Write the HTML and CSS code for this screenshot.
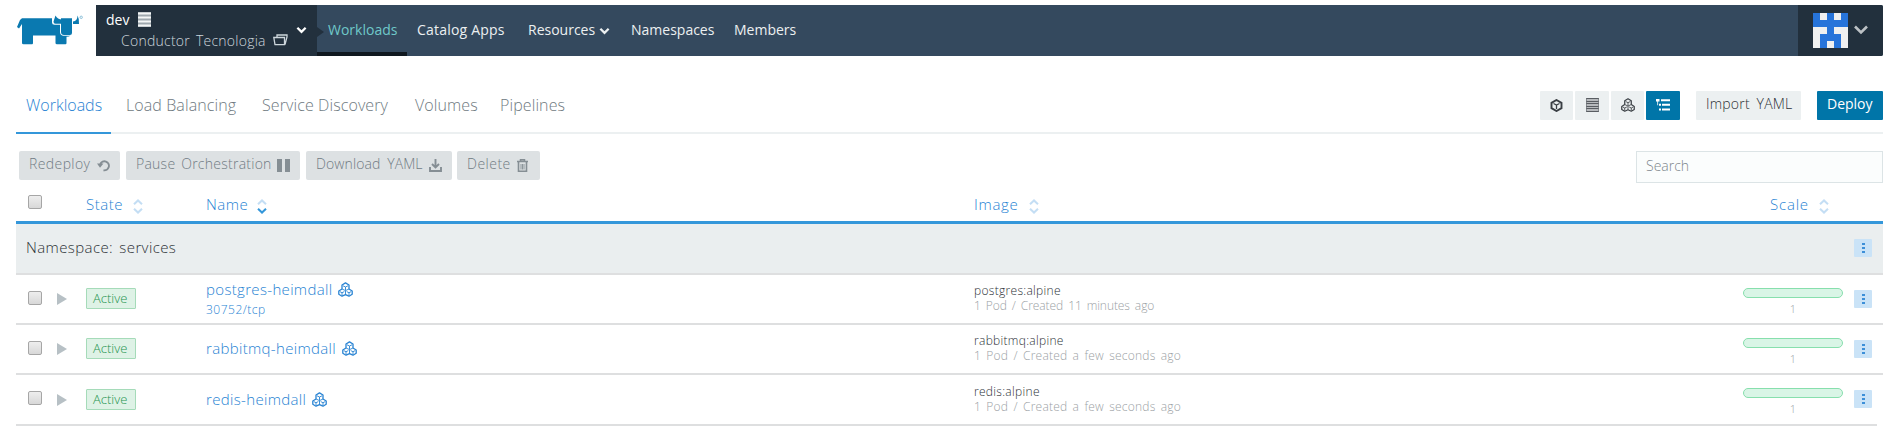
FILE: index.html
```
<!DOCTYPE html>
<html lang="en">
<head>
<meta charset="utf-8">
<title>Workloads</title>
<link rel="stylesheet" href="styles.css">
</head>
<body>
<svg class="defs" width="0" height="0">
  <symbol id="pods" viewBox="0 0 15 15"><g fill="none" stroke="currentColor" stroke-width="1.300" stroke-linejoin="round"><path d="M4 7V3L7.500 .9 11 3V7M4 7 .8 9V12.300L4 14.200 7.500 12.600 11 14.200 14.200 12.300V9L11 7"/></g><g fill="none" stroke="currentColor" stroke-width=".9"><path d="M5 3.800 7.500 5 10 3.800M7.500 5V8.200M4 7 7.500 8.600 11 7M7.500 8.600V12.500M1.800 9.600 4 10.700 6.300 9.600M4 10.700V13.500M8.700 9.600 11 10.700 13.200 9.600M11 10.700V13.500"/></g></symbol>
  <symbol id="sort" viewBox="0 0 10 15"><path class="up" d="M1 5.300 5 1.500 9 5.300" fill="none" stroke-width="2"/><path class="down" d="M1 9.700 5 13.500 9 9.700" fill="none" stroke-width="2"/></symbol>
  <symbol id="chevron" viewBox="0 0 12 8"><path d="M1.500 1.500 6 6 10.500 1.500" fill="none" stroke="currentColor" stroke-width="2.500"/></symbol>
  <symbol id="server" viewBox="0 0 13 14"><path d="M0 0h13v14H0z" fill="currentColor" opacity=".3"/><path d="M.5 .5h12M.5 3.500h12M.5 5.500h12M.5 8.500h12M.5 10.500h12M.5 13.500h12" stroke="currentColor" opacity=".75"/><path d="M.5 0v14M12.500 0v14" stroke="currentColor" opacity=".4"/></symbol>
</svg>

<header class="header">
  <a class="logo">
    <svg width="68" height="31" viewBox="0 0 68 31"><path fill="#0a79b0" d="M5 3.200H35V7.500Q35 9.700 37.500 9.700H43V17Q43 20 46 20.800H53.500Q52 21.800 49.500 21.800V28Q49.500 29.300 48.500 29.300H40Q38.500 29.300 38.500 28V20.500H16V28Q16 29.300 15 29.300H6.500Q5 29.300 5 28V9L2 13.500 0 12 3 5Z"/><path fill="#0a79b0" d="M44 3.200H55V18Q55 20 53 20H47Q44 20 44 17ZM38.500 .5Q40.500 4.500 45 4.500V8.700H38.500Q36.300 8.700 36.500 6.500ZM60.500 .5Q62.500 4 62 9H56V6.500Q60.500 6 60.500 .5Z"/><circle cx="64.200" cy="2.300" r="1.200" fill="none" stroke="#75b3d1" stroke-width=".8"/></svg>
  </a>
  <div class="bar">
    <div class="scope">
      <div class="scope-names">
        <div class="cluster">dev <svg width="13" height="15" viewBox="0 0 13 15"><path d="M0 0h13v15H0z" fill="#9fa8ae"/><path d="M0 1.500h13M0 5.500h13M0 9.500h13M0 13.500h13" stroke="#f4f6f6" stroke-width="2"/></svg></div>
        <div class="project">Conductor Tecnologia
          <svg width="15" height="12" viewBox="0 0 15 12" fill="none" stroke="currentColor" stroke-width="1.300"><path d="M2 10.700.8 3.500H11.500V10.700ZM4 3V1H14V3L12 10.700"/></svg>
        </div>
      </div>
      <svg class="scope-chevron" width="11" height="8"><use href="#chevron"/></svg>
    </div>
    <nav class="nav">
      <a class="nav-item nav-active">Workloads</a>
      <a class="nav-item nav-catalog">Catalog Apps</a>
      <a class="nav-item nav-resources">Resources <svg width="11" height="8"><use href="#chevron"/></svg></a>
      <a class="nav-item nav-namespaces">Namespaces</a>
      <a class="nav-item nav-members">Members</a>
    </nav>
    <div class="user">
      <svg width="35" height="35" viewBox="0 0 5 5" shape-rendering="crispEdges"><path fill="#f0f0f0" d="M0 0h5v5H0z"/><path fill="#2774da" d="M0 0h1v1h1V0h1v1h1V0h1v2H3v1h1v2H3V4H2v1H1V3h1V2H0z"/></svg>
      <svg class="user-chevron" width="14" height="10" viewBox="0 0 14 10"><path d="M1 1.500 7 7.500 13 1.500" fill="none" stroke="#bcc1c5" stroke-width="2.600"/></svg>
    </div>
  </div>
</header>

<section class="tabs">
  <a class="tab tab-active">Workloads</a>
  <a class="tab tab-lb">Load Balancing</a>
  <a class="tab tab-sd">Service Discovery</a>
  <a class="tab tab-vol">Volumes</a>
  <a class="tab">Pipelines</a>
  <div class="tools">
    <div class="views">
      <span class="view view-narrow"><svg width="13" height="13" viewBox="0 0 13 13" fill="none" stroke="currentColor"><path stroke-width="1.900" d="M6.500 1 11.500 3.800V9.200L6.500 12 1.500 9.200V3.800Z"/><path d="M3.500 4.500 6.500 6 9.500 4.500M6.500 6V10" stroke-width="1.300"/></svg></span>
      <span class="view"><svg width="13" height="14"><use href="#server"/></svg></span>
      <span class="view view-narrow"><svg width="14" height="14"><use href="#pods"/></svg></span>
      <span class="view view-on"><svg width="14" height="12" viewBox="0 0 14 12" fill="#fff"><path d="M0 0h3.500v2.500H0zM5 .2h9v2H5zM3 4.700h2v2H3zM6 4.700h8v2H6zM3 9.400h2v2H3zM6 9.400h8v2H6zM1.300 2.500h.8v3.700h-.8z"/></svg></span>
    </div>
    <button class="btn btn-import">Import YAML</button>
    <button class="btn btn-deploy">Deploy</button>
  </div>
</section>

<section class="actions">
  <button class="act act-redeploy">Redeploy <svg width="13" height="13" viewBox="0 0 13 13"><path d="M6.500 11.200A4.500 4.500 0 1 0 3.300 5" fill="none" stroke="currentColor" stroke-width="1.900"/><path d="M0 4.500H6.500L3 8.800Z" fill="currentColor"/></svg></button>
  <button class="act act-pause">Pause Orchestration <svg width="13" height="13" viewBox="0 0 13 13"><path d="M0 0h5v13H0zM8 0h5v13H8z" fill="currentColor"/></svg></button>
  <button class="act act-download">Download YAML <svg width="13" height="13" viewBox="0 0 13 13"><path d="M1 8V12H12V8M6.500 0V8M3 5 6.500 8.500 10 5" fill="none" stroke="currentColor" stroke-width="1.900"/></svg></button>
  <button class="act act-delete">Delete <svg width="11" height="13" viewBox="0 0 11 13" fill="none" stroke="currentColor"><path d="M0 2.500H11M3.500 2V.7H7.500V2" stroke-width="1.500"/><path d="M1.500 3V12.200H9.500V3" stroke-width="1.600"/><path d="M4 5V10.500M5.500 5V10.500M7 5V10.500" stroke-width=".9"/></svg></button>
  <input class="search" type="text" placeholder="Search">
</section>

<main class="table">
  <div class="row head">
    <span class="check"></span><span></span>
    <span class="th th-state">State <svg width="10" height="15"><use href="#sort"/></svg></span>
    <span class="th th-name">Name <svg class="sorted" width="10" height="15"><use href="#sort"/></svg></span>
    <span class="th th-image">Image <svg width="10" height="15"><use href="#sort"/></svg></span>
    <span class="th th-scale">Scale <svg width="10" height="15"><use href="#sort"/></svg></span>
    <span></span>
  </div>
  <div class="group"><span>Namespace: services</span><span class="menu"><i></i><i></i><i></i></span></div>

  <div class="row item">
    <span class="check"></span><span class="expand"></span><span class="badge">Active</span>
    <div class="name"><a class="link">postgres-heimdall</a><svg width="15" height="15"><use href="#pods"/></svg><a class="port">30752/tcp</a></div>
    <div class="image"><div class="img-name">postgres:alpine</div><div class="img-info img-info-tight">1 Pod / Created 11 minutes ago</div></div>
    <div class="scale"><div class="meter"></div><div class="count">1</div></div>
    <span class="menu"><i></i><i></i><i></i></span>
  </div>
  <div class="row item">
    <span class="check"></span><span class="expand"></span><span class="badge">Active</span>
    <div class="name"><a class="link">rabbitmq-heimdall</a><svg width="15" height="15"><use href="#pods"/></svg></div>
    <div class="image"><div class="img-name">rabbitmq:alpine</div><div class="img-info">1 Pod / Created a few seconds ago</div></div>
    <div class="scale"><div class="meter"></div><div class="count">1</div></div>
    <span class="menu"><i></i><i></i><i></i></span>
  </div>
  <div class="row item item-last">
    <span class="check"></span><span class="expand"></span><span class="badge">Active</span>
    <div class="name"><a class="link">redis-heimdall</a><svg width="15" height="15"><use href="#pods"/></svg></div>
    <div class="image"><div class="img-name">redis:alpine</div><div class="img-info">1 Pod / Created a few seconds ago</div></div>
    <div class="scale"><div class="meter"></div><div class="count">1</div></div>
    <span class="menu"><i></i><i></i><i></i></span>
  </div>
</main>
</body>
</html>
```
FILE: styles.css
```
* { box-sizing: border-box; }
body { margin: 0; height: 442px; padding: 5px 6px 0 16px; background: #fff; font-family: "Open Sans", "Noto Sans", sans-serif; font-weight: 300; font-size: 14px; color: #2c3136; overflow: hidden; white-space: nowrap; }
svg { display: block; flex: none; }
.defs { position: absolute; }
.up { stroke: #c4def4; }
.down { stroke: var(--down, #c4def4); }
.sorted { --down: #3497da; }
button { border: 0; margin: 0; font: inherit; letter-spacing: inherit; }

.header { display: flex; height: 51px; }
.logo { width: 80px; padding: 10px 0 0 1px; }
.bar { display: flex; flex: 1; background: #34495e; border-radius: 0 2px 2px 0; overflow: hidden; }
.scope { display: flex; position: relative; width: 221px; background: #22303d; }
.scope::after { content: ""; position: absolute; left: 221px; top: 22px; border: 5px solid transparent; border-left: 7px solid #22303d; border-right: 0; }
.scope-names { width: 200px; padding: 4px 0 0 10px; }
.cluster { display: flex; gap: 9px; align-items: center; height: 21px; color: #fff; font-weight: 400; }
.project { display: flex; gap: 7px; align-items: center; height: 20px; padding-left: 15px; color: #cdd6dc; letter-spacing: .25px; word-spacing: 2px; }
.scope-chevron { margin: 21px 0 0; color: #fff; }
.nav { display: flex; flex: 1; color: #ecf0f1; font-weight: 400; line-height: 50px; }
.nav-item { display: flex; }
.nav-active { width: 90px; padding-left: 11px; color: #6fc8c9; border-bottom: 4px solid #10181f; }
.nav-catalog { width: 111px; padding-left: 10px; letter-spacing: .2px; }
.nav-resources { width: 103px; padding-left: 10px; }
.nav-resources svg { margin: 22px 0 0 4px; }
.nav-namespaces { width: 103px; padding-left: 10px; }
.nav-members { padding-left: 10px; }
.user { display: flex; width: 85px; padding: 8px 0 0 15px; background: #22303d; }
.user-chevron { margin: 12px 0 0 6px; }

.tabs { display: flex; height: 78px; border-bottom: 2px solid #ecf0f1; font-size: 16px; color: #6f7a81; }
.tab { height: 78px; padding: 37px 0 0 10px; line-height: 24px; margin-right: 5px; letter-spacing: .1px; }
.tab-active { width: 95px; border-bottom: 2px solid #3497da; color: #2883d3; letter-spacing: 0; }
.tab-lb { width: 131px; }
.tab-sd { width: 148px; }
.tab-vol { width: 80px; }
.tools { display: flex; gap: 16px; margin: 35px 0 0 auto; font-size: 14px; }
.views { display: flex; gap: 2px; }
.view { display: flex; align-items: center; justify-content: center; width: 34px; height: 29px; padding-bottom: 1px; border-radius: 1px; background: #ecf0f1; color: #3a3f44; }
.view-narrow { width: 33px; }
.view-on { background: #0075a8; }
.btn { height: 29px; padding: 0 0 4px 10px; border-radius: 1px; background: #ecf0f1; color: #2c3136; text-align: left; }
.btn-import { width: 105px; letter-spacing: .2px; word-spacing: 3px; }
.btn-deploy { width: 66px; background: #0075a8; color: #fff; font-weight: 400; }

.actions { display: flex; padding: 17px 0 0 3px; height: 49px; }
.act { display: flex; justify-content: space-between; align-items: center; height: 29px; padding: 0 10px 4px; margin-right: 6px; border-radius: 2px; background: #dde1e3; color: #717c83; font-size: 14px; }
.act svg { position: relative; top: 2px; color: #858e94; }
.act-redeploy { width: 101px; letter-spacing: .4px; }
.act-pause { width: 174px; letter-spacing: .25px; word-spacing: 2px; }
.act-download { width: 146px; margin-right: 5px; letter-spacing: .1px; word-spacing: 3px; }
.act-delete { width: 83px; padding-right: 12px; letter-spacing: .5px; }
.search { width: 247px; height: 32px; margin-left: auto; padding: 0 9px 3px; border: 1px solid #dce4e6; background: #fbfdfd; font: inherit; outline: 0; }
.search::placeholder { color: #7d868c; opacity: 1; }

.row { display: grid; grid-template-columns: 29px 29px 120px 768px 769px 111px 18px; padding-left: 12px; }
.check { width: 14px; height: 14px; border: 1px solid #a6a6a6; border-radius: 2px; background: linear-gradient(#eee, #d8d8d8); }
.head { height: 41px; padding-top: 9px; border-bottom: 3px solid #3497da; color: #2883d3; font-size: 15px; }
.head .check { margin-top: 3px; }
.th { display: flex; line-height: 24px; letter-spacing: .5px; }
.th svg { margin: 7px 0 0; }
.th-state { gap: 10px; }
.th-name { gap: 9px; }
.th-image { gap: 10px; letter-spacing: .7px; }
.th-scale { gap: 10px; padding-left: 27px; letter-spacing: .8px; }
.group { display: flex; justify-content: space-between; height: 51px; padding: 15px 11px 0 10px; background: #eaeeef; border-bottom: 2px solid #dedfe0; font-size: 15px; line-height: 17px; letter-spacing: .4px; word-spacing: 2px; }
.menu { display: flex; flex-direction: column; align-items: center; justify-content: center; gap: 2px; width: 18px; height: 18px; border-radius: 1px; background: #cae3f7; }
.menu i { width: 3px; height: 2px; background: #3c8fd8; }
.item { height: 50px; border-bottom: 2px solid #dedfe0; }
.item-last { height: 51px; margin-right: 6px; }
.item .check { margin-top: 16px; }
.expand { width: 0; height: 0; margin-top: 18px; border: 6px solid transparent; border-left: 10px solid #b7c0c5; border-right: 0; }
.badge { width: 50px; height: 21px; margin-top: 13px; padding-left: 6px; border: 1px solid #a5dbb9; border-radius: 1px; background: #def2e6; color: #1f9450; font-size: 13px; line-height: 18px; }
.item-last .badge, .item-last .expand { margin-bottom: -1px; }
.item-last .badge { margin-top: 14px; }
.item-last .expand { margin-top: 19px; }
.name { display: flex; flex-wrap: wrap; align-content: center; gap: 0 6px; padding-bottom: 2px; color: #2883d3; font-size: 15px; }
.name svg { margin-top: 3px; }
.link { line-height: 20px; letter-spacing: .33px; }
.port { width: 100%; padding-top: 3px; font-size: 12px; line-height: 16px; letter-spacing: .5px; }
.image { padding-top: 8px; font-size: 12px; line-height: 15px; }
.item-last .image { padding-top: 9px; }
.img-name { color: #2c3136; letter-spacing: .3px; }
.img-info { color: #9ba1a5; letter-spacing: .2px; word-spacing: 2px; }
.img-info-tight { letter-spacing: -.08px; }
.meter { width: 100px; height: 10px; margin-top: 13px; border: 1px solid #87dfad; border-radius: 5px; background: #d9f5e6; }
.count { width: 100px; margin-top: 4px; text-align: center; color: #9ba1a5; font-size: 11px; line-height: 14px; }
.item .menu { margin-top: 15px; }
```
